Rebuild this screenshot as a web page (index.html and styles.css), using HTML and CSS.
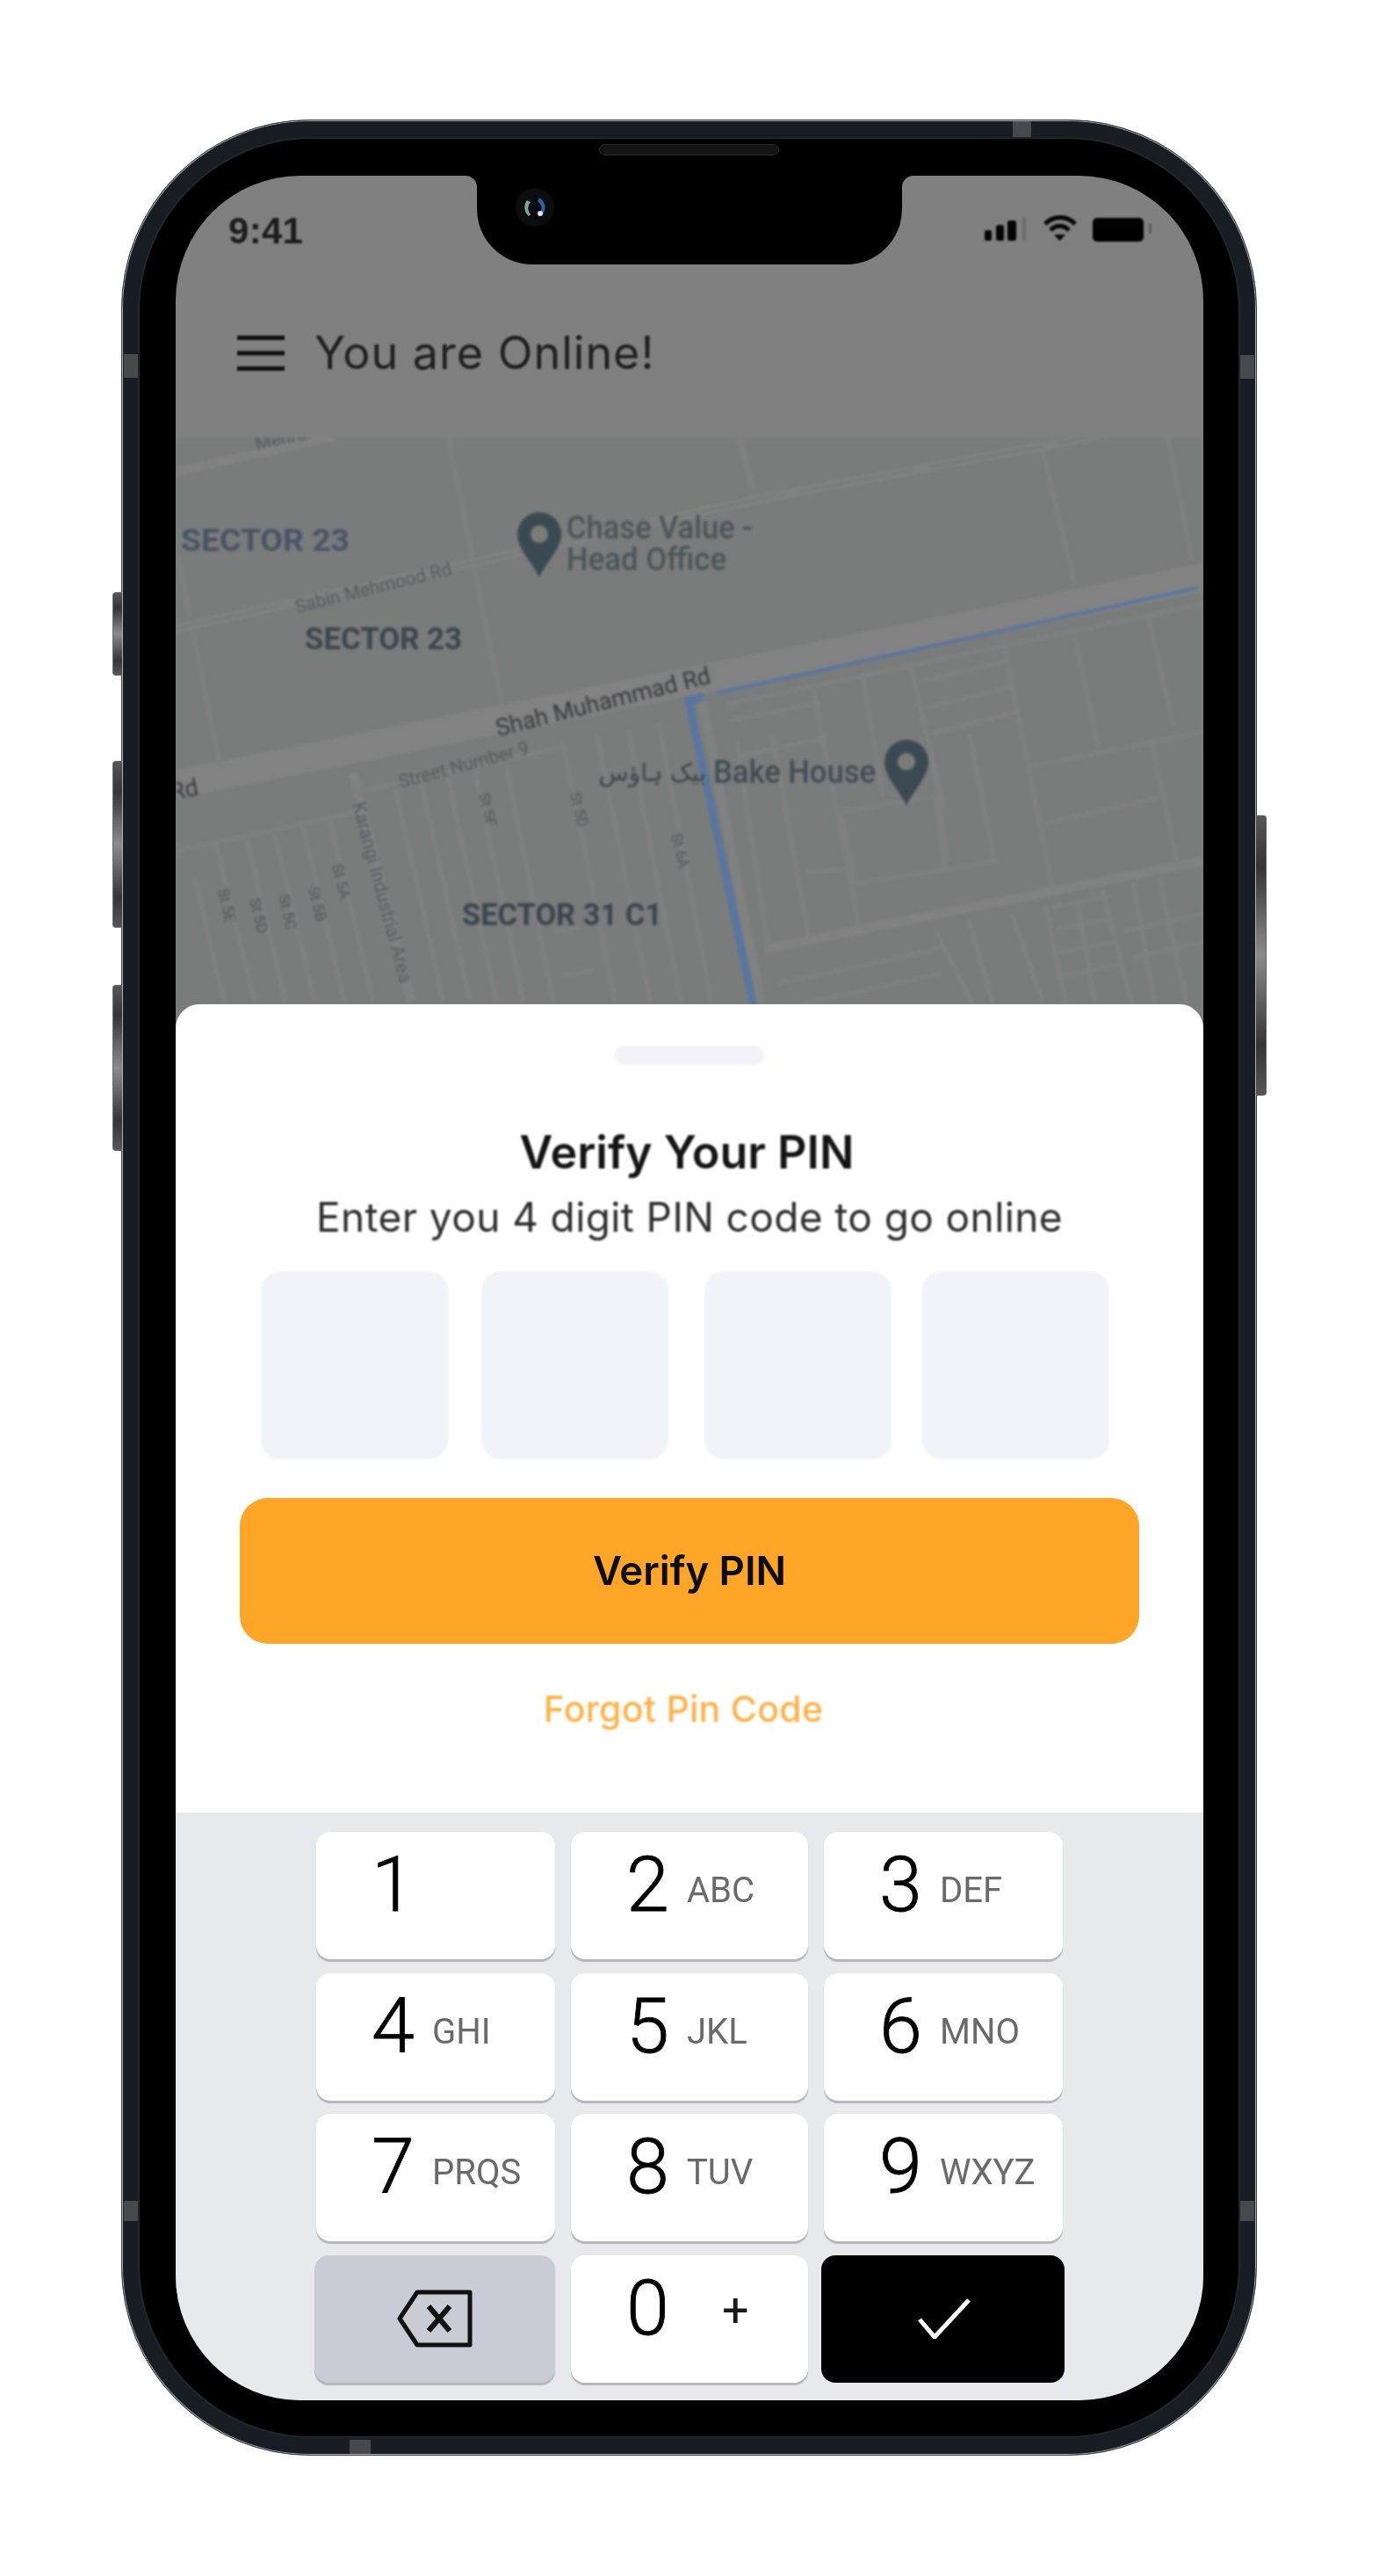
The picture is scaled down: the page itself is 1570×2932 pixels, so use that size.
FILE: index.html
```html
<!DOCTYPE html>
<html lang="en">
<head>
<meta charset="utf-8">
<title>Verify Your PIN</title>
<link rel="stylesheet" href="styles.css">
</head>
<body>
<div class="phone">
  <span class="side side-a"></span>
  <span class="side side-b"></span>
  <span class="side side-c"></span>
  <span class="side side-r"></span>
  <span class="ant ant-top"></span>
  <span class="ant ant-left"></span>
  <span class="ant ant-right"></span>
  <span class="ant ant-left2"></span>
  <span class="ant ant-right2"></span>
  <span class="ant ant-bottom"></span>
  <div class="bezel">
    <span class="speaker"></span>
    <div class="screen">
      <svg class="notch" width="510" height="101" viewBox="0 0 510 101">
        <path d="M0 0A13 13 0 0 1 13 13V38A63 63 0 0 0 76 101H434A63 63 0 0 0 497 38V13A13 13 0 0 1 510 0Z" fill="#000"/>
        <circle cx="79" cy="36" r="22" fill="#0d0d10"/>
        <circle cx="79" cy="36" r="13" fill="#070b10"/>
        <path d="M70 28A13 13 0 0 0 72 46L74 44A10 10 0 0 1 74 30Z" fill="#7fa596"/>
        <path d="M84 25A13 13 0 0 1 88 44L85 42A9 9 0 0 0 82 29Z" fill="#2b5fa6"/>
        <circle cx="85" cy="43" r="3" fill="#e5dff0"/>
      </svg>
      <div class="top">
        <div class="status">
          <span class="time">9:41</span>
          <svg class="status-icons" width="192" height="34" viewBox="1120 248 192 34">
            <rect x="1121" y="266" width="8" height="12" rx="2.5" fill="#050505"/>
            <rect x="1134" y="260" width="9" height="18" rx="2.5" fill="#050505"/>
            <rect x="1147" y="255" width="10" height="23" rx="2.5" fill="#050505"/>
            <rect x="1164" y="251" width="4" height="27" rx="2" fill="#6c6c6c"/>
            <path d="M1190 259A23 23 0 0 1 1224 259" fill="none" stroke="#050505" stroke-width="5"/>
            <path d="M1196 266A14 14 0 0 1 1217 266" fill="none" stroke="#050505" stroke-width="5"/>
            <path d="M1200 271H1213L1206.500 278Z" fill="#050505"/>
            <rect x="1244" y="252" width="58" height="27" rx="5" fill="#000"/>
            <rect x="1308" y="258" width="3" height="12" rx="1.500" fill="#5c5c5c"/>
          </svg>
        </div>
        <div class="appbar">
          <svg width="54" height="40" viewBox="0 0 54 40">
            <path d="M0 2.500H54M0 20H54M0 37.500H54" stroke="#0e0e0e" stroke-width="5"/>
          </svg>
          <h2 class="online">You are Online!</h2>
        </div>
      </div>

      <svg class="map" width="1170" height="680" viewBox="200 498 1170 680">
        <rect x="200" y="498" width="1170" height="680" fill="#7a7c7b"/>
        <g class="rd-wide">
          <path d="M190 895L870 759L1380 655"/>
        </g>
        <g class="rd-mid">
          <path d="M190 718L864 568L1191 507L1300 485"/>
          <path d="M871 1080L1380 978"/>
          <path d="M468 1140L402 880"/>
          <path d="M200 537L380 497"/>
          <path d="M866 1140L800 800"/>
        </g>
        <path class="rd-median" d="M190 718L864 568L1191 507L1300 485"/>
        <g class="rd-thin">
          <path d="M511 499L572 807"/>
          <path d="M840 499L858 555"/>
          <path d="M203 633L216 702"/>
          <path d="M220 720L251 874"/>
          <path d="M405 902L641 850"/>
          <path d="M200 969L407 924"/>
          <path d="M222 1000L255 1140M246 960L290 1140M281 955L325 1140M313 950L358 1140M345 940L392 1140M376 935L425 1140"/>
          <path d="M450 898L505 1140M480 892L535 1140M510 885L565 1140M541 878L596 1140M576 870L630 1140"/>
          <path d="M641 845L700 1140M680 838L740 1140M715 830L775 1140M750 822L810 1140"/>
          <path d="M630 1060L660 1055M640 1110L675 1105"/>
          <path d="M845 499L855 555"/>
          <path d="M1187 512L1223 663"/>
          <path d="M1330 499L1357 637"/>
          <path d="M827 802L1370 687"/>
          <path d="M926 785L978 1054"/>
          <path d="M982 767L1005 906"/>
          <path d="M1037 759L1075 920"/>
          <path d="M1144 737L1199 1015"/>
          <path d="M1223 720L1250 850"/>
          <path d="M1306 698L1337 828"/>
          <path d="M839 845L875 1080M879 837L922 1071"/>
          <path d="M830 820L935 800M845 860L940 840M1048 775L1150 752M1055 805L1152 782M1060 835L1160 810"/>
          <path d="M918 993L962 989M958 924L1065 906M974 1006L1136 980"/>
          <path d="M958 928L974 1006M1065 906L1075 984M1057 841L1080 980M1104 837L1132 980"/>
          <path d="M1175 872L1370 833"/>
          <path d="M1191 937L1318 908"/>
          <path d="M1310 841L1340 980"/>
          <path d="M885 1120L1070 1080M890 1148L1072 1108"/>
          <path d="M1065 1060L1110 1148M1103 1048L1132 1148M1152 1040L1190 1148M1190 1030L1214 1148M1226 1025L1248 1148M1255 1012L1290 1148M1290 1005L1316 1148M1320 1000L1352 1148"/>
          <path d="M1198 1032L1265 1020M1202 1058L1265 1046M1200 1085L1270 1072M1204 1112L1275 1098"/>
          <path d="M1280 1060L1370 1040M1290 1090L1370 1072"/>
        </g>
        <path class="route-thin" d="M1364 669L816 789"/>
        <path class="route" d="M801 793L784 797L858 1145"/>
        <text class="t-sector blue" x="206" y="627" textLength="192" lengthAdjust="spacingAndGlyphs">SECTOR 23</text>
        <text class="t-sector" x="347" y="739" textLength="179" lengthAdjust="spacingAndGlyphs">SECTOR 23</text>
        <text class="t-sector" x="526" y="1053" textLength="228" lengthAdjust="spacingAndGlyphs">SECTOR 31 C1</text>
        <text class="t-place" x="645" y="613" textLength="212" lengthAdjust="spacingAndGlyphs">Chase Value -</text>
        <text class="t-place" x="645" y="649" textLength="182" lengthAdjust="spacingAndGlyphs">Head Office</text>
        <text class="t-place dark" x="812" y="891" textLength="185" lengthAdjust="spacingAndGlyphs">Bake House</text>
        <text class="t-urdu" x="804" y="889" direction="rtl">بیک ہاؤس</text>
        <text class="t-road" transform="translate(567 838) rotate(-14)">Shah Muhammad Rd</text>
        <text class="t-road" transform="translate(196 911) rotate(-12)">Rd</text>
        <text class="t-small" transform="translate(338 698) rotate(-14)">Sabin Mehmood Rd</text>
        <text class="t-small" transform="translate(456 897) rotate(-15)">Street Number 9</text>
        <text class="t-small" transform="translate(401 915) rotate(75)">Karangi Industrial Area</text>
        <text class="t-small" transform="translate(292 512) rotate(-12)">Mehran</text>
        <text class="t-st" transform="translate(545 904) rotate(76)">St 5F</text>
        <text class="t-st" transform="translate(649 903) rotate(76)">St 5D</text>
        <text class="t-st" transform="translate(764 950) rotate(76)">St 6A</text>
        <text class="t-st" transform="translate(248 1013) rotate(76)">St 5E</text>
        <text class="t-st" transform="translate(284 1024) rotate(76)">St 5D</text>
        <text class="t-st" transform="translate(317 1020) rotate(76)">St 5C</text>
        <text class="t-st" transform="translate(351 1011) rotate(76)">St 5B</text>
        <text class="t-st" transform="translate(378 985) rotate(76)">St 5A</text>
        <path class="pin" fill-rule="evenodd" d="M614 583A25 25 0 0 1 639 608C639 625 622 640 614 657C606 640 589 625 589 608A25 25 0 0 1 614 583ZM614 598A10 10 0 1 0 614 618A10 10 0 1 0 614 598Z"/>
        <path class="pin" fill-rule="evenodd" d="M1032 842A25 25 0 0 1 1057 867C1057 884 1040 900 1032 917C1024 900 1007 884 1007 867A25 25 0 0 1 1032 842ZM1032 857A10 10 0 1 0 1032 877A10 10 0 1 0 1032 857Z"/>
      </svg>

      <section class="sheet">
        <span class="handle"></span>
        <h1 class="title">Verify Your PIN</h1>
        <p class="sub">Enter you 4 digit PIN code to go online</p>
        <div class="pins">
          <span class="pinbox"></span>
          <span class="pinbox"></span>
          <span class="pinbox pinbox-3"></span>
          <span class="pinbox pinbox-4"></span>
        </div>
        <button class="verify">Verify PIN</button>
        <a class="forgot">Forgot Pin Code</a>
      </section>

      <section class="keyboard">
        <div class="key"><span class="d">1</span></div>
        <div class="key"><span class="d">2</span><span class="l">ABC</span></div>
        <div class="key"><span class="d">3</span><span class="l">DEF</span></div>
        <div class="key"><span class="d">4</span><span class="l">GHI</span></div>
        <div class="key"><span class="d">5</span><span class="l">JKL</span></div>
        <div class="key"><span class="d">6</span><span class="l">MNO</span></div>
        <div class="key"><span class="d">7</span><span class="l">PRQS</span></div>
        <div class="key"><span class="d">8</span><span class="l">TUV</span></div>
        <div class="key"><span class="d">9</span><span class="l">WXYZ</span></div>
        <div class="key key-del">
          <svg width="90" height="68" viewBox="0 0 90 68">
            <path d="M83 4H23L3 34L23 64H83Z" fill="none" stroke="#111" stroke-width="5" stroke-linejoin="round"/>
            <path d="M36 20L60 48M60 20L36 48" stroke="#111" stroke-width="6"/>
          </svg>
        </div>
        <div class="key"><span class="d">0</span><span class="plus">+</span></div>
        <div class="key key-ok">
          <svg width="60" height="46" viewBox="0 0 60 46">
            <path d="M2 24L19 44L58 2" fill="none" stroke="#fff" stroke-width="5"/>
          </svg>
        </div>
      </section>
    </div>
  </div>
</div>
</body>
</html>
```

FILE: styles.css
```css
* { box-sizing: border-box; }
html, body { margin: 0; background: #fff; }
body { width: 1570px; height: 2932px; overflow: hidden; }

.phone {
  position: relative;
  width: 1293px;
  height: 2659px;
  margin: 136px 0 0 138px;
  padding: 21px 20px;
  border-radius: 215px;
  background: #181d24;
  border: 1px solid #3d3f42;
  box-shadow: inset 0 0 0 1px #a9acb4;
}
.bezel {
  position: relative;
  height: 100%;
  padding: 42px 40px 42px 41px;
  border-radius: 196px;
  background: #000;
  box-shadow: 0 0 0 2px #232528;
}
.speaker {
  position: absolute;
  left: 523px;
  top: 6px;
  width: 205px;
  height: 13px;
  border-radius: 7px;
  background: #141414;
  border: 1px solid #2a2a2a;
}
.side {
  position: absolute;
  left: -11px;
  width: 11px;
  border: 1px solid #6b6b6b;
  border-right: 0;
  border-radius: 4px 0 0 4px;
  background: linear-gradient(#565656, #353535 18%, #8b8b8b 50%, #353535 82%, #565656);
}
.side-a { top: 537px; height: 95px; }
.side-b { top: 729px; height: 190px; }
.side-c { top: 984px; height: 189px; }
.side-r {
  left: auto;
  right: -12px;
  top: 791px;
  width: 12px;
  height: 319px;
  border: 1px solid #5c5c5c;
  border-left: 0;
  border-radius: 0 4px 4px 0;
}
.ant { position: absolute; background: #47494c; }
.ant-top { left: 1014px; top: 1px; width: 21px; height: 20px; }
.ant-left { left: 2px; top: 266px; width: 18px; height: 27px; }
.ant-right { right: 2px; top: 267px; width: 18px; height: 27px; }
.ant-left2 { left: 2px; top: 2368px; width: 18px; height: 23px; }
.ant-right2 { right: 2px; top: 2368px; width: 18px; height: 23px; }
.ant-bottom { left: 259px; bottom: 1px; width: 24px; height: 16px; }

.screen {
  position: relative;
  width: 1170px;
  height: 2532px;
  border-radius: 142px;
  overflow: hidden;
  background: #808080;
  display: flex;
  flex-direction: column;
}
.notch { position: absolute; left: 330px; top: 0; z-index: 5; }

.top { height: 298px; flex: none; filter: blur(1.3px); }
.status {
  height: 120px;
  padding: 44px 58px 0 60px;
  display: flex;
  justify-content: space-between;
  align-items: flex-start;
}
.time {
  font: 700 42px/38px "Liberation Sans", sans-serif;
  letter-spacing: 0.3px;
  color: #1c1c1c;
}
.appbar {
  height: 178px;
  padding: 0 0 14px 70px;
  display: flex;
  align-items: center;
  gap: 34px;
}
.online {
  margin: 0;
  font: 400 52px/60px Inter, sans-serif;
  color: #1f1f1f;
  letter-spacing: 1px;
}

.map { display: block; flex: none; margin-bottom: -35px; filter: blur(1.4px); }
.rd-wide path { fill: none; stroke: #828282; stroke-width: 32px; }
.rd-mid path { fill: none; stroke: #818181; stroke-width: 10px; }
.rd-median { fill: none; stroke: #7a7c7b; stroke-width: 3px; stroke-dasharray: 130 18; }
.rd-thin path { fill: none; stroke: #808080; stroke-width: 4.5px; }
.route { fill: none; stroke: #5a769e; stroke-width: 9px; }
.route-thin { fill: none; stroke: #5a769e; stroke-width: 4px; }
.pin { fill: #3b4a52; }
.t-sector { font: 700 35px Roboto, sans-serif; fill: #3a434d; }
.t-sector.blue { fill: #475365; }
.t-place { font: 500 36px Roboto, sans-serif; fill: #4b5458; }
.t-place.dark { fill: #414b53; }
.t-urdu { font: 400 28px "DejaVu Sans", sans-serif; fill: #3d4247; }
.t-road { font: 400 27px Roboto, sans-serif; fill: #36393b; }
.t-small { font: 400 21px Roboto, sans-serif; fill: #565a5d; }
.t-st { font: 400 17px Roboto, sans-serif; fill: #505457; }

.sheet {
  position: relative;
  height: 920px;
  flex: none;
  background: #fff;
  border-radius: 27px 27px 0 0;
  padding-top: 47px;
  display: flex;
  flex-direction: column;
  align-items: center;
}
.handle {
  width: 170px;
  height: 22px;
  border-radius: 11px;
  background: #f2f3f8;
  filter: blur(0.8px);
}
.title {
  margin: 70px 6px 0 0;
  font: 600 52px/60px Inter, sans-serif;
  color: #141414;
  filter: blur(0.8px);
}
.sub {
  margin: 15px 0 0;
  font: 400 46px/56px Inter, sans-serif;
  letter-spacing: 0.4px;
  color: #2e2e2e;
  filter: blur(0.8px);
}
.pins {
  margin-top: 34px;
  width: 966px;
  margin-left: -10px;
  display: flex;
  gap: 38px;
}
.pinbox {
  width: 213px;
  height: 214px;
  border-radius: 22px;
  background: #f2f3f8;
  filter: blur(0.8px);
}
.pinbox-3 { margin-left: 3px; }
.pinbox-4 { margin-left: -3px; }
.verify {
  margin-top: 44px;
  width: 1024px;
  height: 166px;
  border: 0;
  border-radius: 32px;
  background: #ffa629;
  font: 600 45.500px/1 Inter, sans-serif;
  color: #0c0c0c;
  filter: blur(0.7px);
}
.forgot {
  margin: 49px 14px 0 0;
  font: 500 41px/50px Inter, sans-serif;
  letter-spacing: 0.3px;
  color: #ffb24a;
  filter: blur(0.8px);
}

.keyboard {
  flex: 1;
  background: #e8e9ed;
  padding: 22px 0 0 160px;
  display: grid;
  grid-template-columns: 272px 270px 272px;
  grid-auto-rows: 145px;
  column-gap: 18px;
  row-gap: 15.500px;
  align-content: start;
}
.key {
  display: flex;
  align-items: flex-start;
  padding: 16px 0 0 63px;
  border-radius: 16px;
  background: #fff;
  box-shadow: 0 3px 1px #b5b6ba;
  filter: blur(0.7px);
}
.d {
  width: 69px;
  flex: none;
  font: 300 88px/88px Roboto, sans-serif;
  -webkit-text-stroke: 0.8px #000;
  color: #000;
}
.l {
  margin-top: 31px;
  font: 400 40px/40px Roboto, sans-serif;
  color: #6a6a6a;
}
.plus {
  margin: 20px 0 0 40px;
  font: 400 54px/54px Roboto, sans-serif;
  color: #1a1a1a;
}
.key-del, .key-ok { padding: 0; align-items: center; justify-content: center; }
.key-del { background: #c9ccd4; margin-left: -2px; }
.key-del svg { margin-left: 4px; }
.key-ok { background: #000; margin: 0 -2px 0 -3px; box-shadow: none; }
.key-ok svg { margin-left: 3px; }
```
